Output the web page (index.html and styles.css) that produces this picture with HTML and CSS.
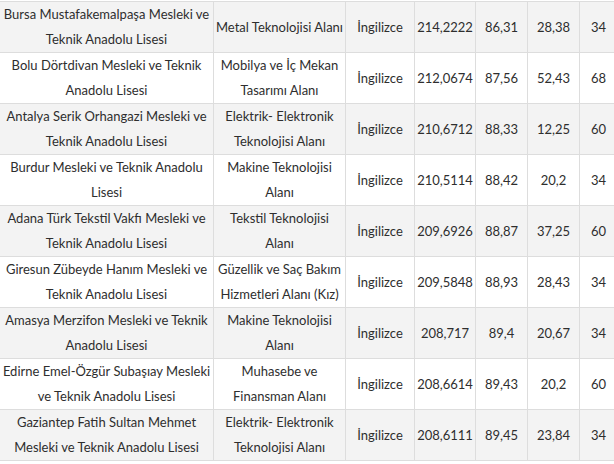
FILE: index.html
```html
<!DOCTYPE html>
<html lang="tr">
<head>
<meta charset="utf-8">
<link rel="stylesheet" href="styles.css">
</head>
<body>
<div class="table">
  <div class="row alt">
    <div class="cell">Bursa Mustafakemalpaşa Mesleki ve Teknik Anadolu Lisesi</div>
    <div class="cell">Metal Teknolojisi Alanı</div>
    <div class="cell">İngilizce</div>
    <div class="cell">214,2222</div>
    <div class="cell">86,31</div>
    <div class="cell">28,38</div>
    <div class="cell">34</div>
  </div>
  <div class="row">
    <div class="cell">Bolu Dörtdivan Mesleki ve Teknik Anadolu Lisesi</div>
    <div class="cell">Mobilya ve İç Mekan Tasarımı Alanı</div>
    <div class="cell">İngilizce</div>
    <div class="cell">212,0674</div>
    <div class="cell">87,56</div>
    <div class="cell">52,43</div>
    <div class="cell">68</div>
  </div>
  <div class="row alt">
    <div class="cell">Antalya Serik Orhangazi Mesleki ve Teknik Anadolu Lisesi</div>
    <div class="cell">Elektrik- Elektronik Teknolojisi Alanı</div>
    <div class="cell">İngilizce</div>
    <div class="cell">210,6712</div>
    <div class="cell">88,33</div>
    <div class="cell">12,25</div>
    <div class="cell">60</div>
  </div>
  <div class="row">
    <div class="cell">Burdur Mesleki ve Teknik Anadolu Lisesi</div>
    <div class="cell">Makine Teknolojisi Alanı</div>
    <div class="cell">İngilizce</div>
    <div class="cell">210,5114</div>
    <div class="cell">88,42</div>
    <div class="cell">20,2</div>
    <div class="cell">34</div>
  </div>
  <div class="row alt">
    <div class="cell">Adana Türk Tekstil Vakfı Mesleki ve Teknik Anadolu Lisesi</div>
    <div class="cell">Tekstil Teknolojisi Alanı</div>
    <div class="cell">İngilizce</div>
    <div class="cell">209,6926</div>
    <div class="cell">88,87</div>
    <div class="cell">37,25</div>
    <div class="cell">60</div>
  </div>
  <div class="row">
    <div class="cell">Giresun Zübeyde Hanım Mesleki ve Teknik Anadolu Lisesi</div>
    <div class="cell">Güzellik ve Saç Bakım Hizmetleri Alanı (Kız)</div>
    <div class="cell">İngilizce</div>
    <div class="cell">209,5848</div>
    <div class="cell">88,93</div>
    <div class="cell">28,43</div>
    <div class="cell">34</div>
  </div>
  <div class="row alt">
    <div class="cell">Amasya Merzifon Mesleki ve Teknik Anadolu Lisesi</div>
    <div class="cell">Makine Teknolojisi Alanı</div>
    <div class="cell">İngilizce</div>
    <div class="cell">208,717</div>
    <div class="cell">89,4</div>
    <div class="cell">20,67</div>
    <div class="cell">34</div>
  </div>
  <div class="row">
    <div class="cell">Edirne Emel-Özgür Subaşıay Mesleki ve Teknik Anadolu Lisesi</div>
    <div class="cell">Muhasebe ve Finansman Alanı</div>
    <div class="cell">İngilizce</div>
    <div class="cell">208,6614</div>
    <div class="cell">89,43</div>
    <div class="cell">20,2</div>
    <div class="cell">60</div>
  </div>
  <div class="row alt">
    <div class="cell">Gaziantep Fatih Sultan Mehmet Mesleki ve Teknik Anadolu Lisesi</div>
    <div class="cell">Elektrik- Elektronik Teknolojisi Alanı</div>
    <div class="cell">İngilizce</div>
    <div class="cell">208,6111</div>
    <div class="cell">89,45</div>
    <div class="cell">23,84</div>
    <div class="cell">34</div>
  </div>
</div>
</body>
</html>
```

FILE: styles.css
```css
html, body {
  margin: 0;
  padding: 0;
  background: #ffffff;
  overflow: hidden;
}

.table {
  display: grid;
  grid-template-columns: 213px 131px 68px 60px 51px 51px 37px;
  grid-auto-rows: 50px;
  gap: 1px;
  padding: 1px 1px 1px 0;
  margin-top: 1px;
  width: max-content;
  background: #dddddd;
  font-family: "Lato", "Liberation Sans", sans-serif;
  font-size: 13px;
  line-height: 25px;
  color: #2e2e2e;
}

.row {
  display: contents;
}

.cell {
  display: flex;
  align-items: center;
  justify-content: center;
  text-align: center;
  padding: 0 1px;
  background: #ffffff;
  overflow: hidden;
}

.row.alt .cell {
  background: #f3f3f3;
}
```
